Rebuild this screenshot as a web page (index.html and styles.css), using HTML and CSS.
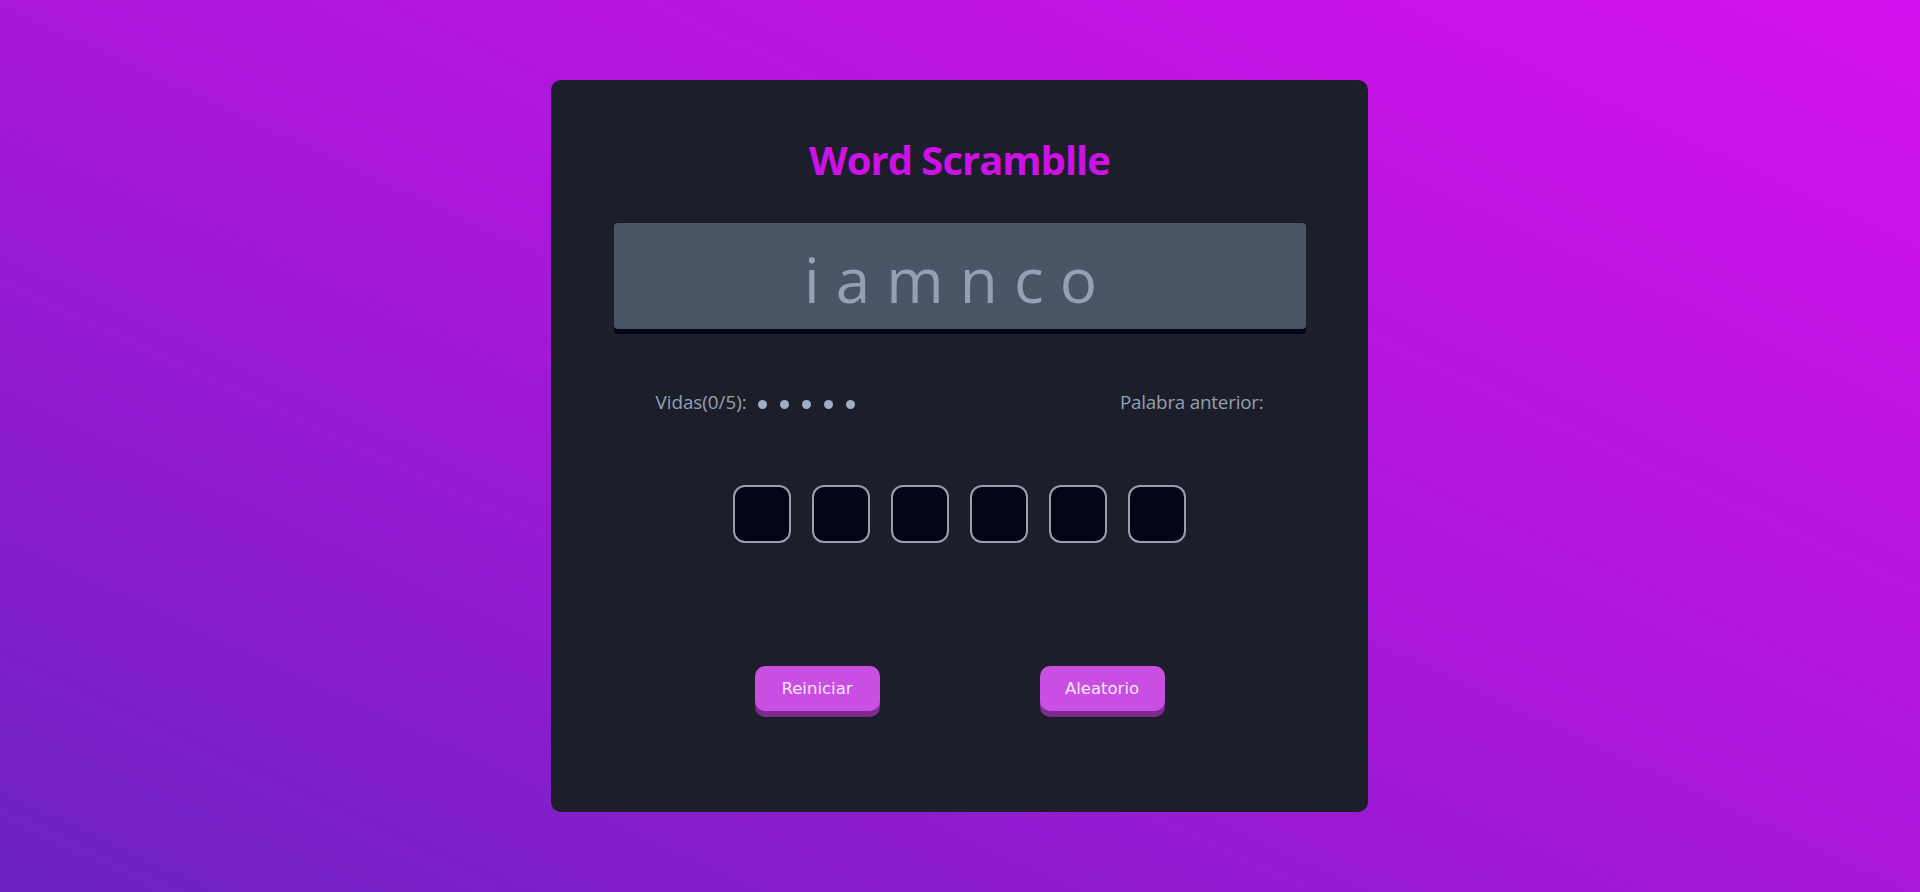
FILE: index.html
```html
<!DOCTYPE html>
<html lang="es">
<head>
<meta charset="utf-8">
<title>Word Scramblle</title>
<link rel="stylesheet" href="styles.css">
</head>
<body>
  <main class="card">
    <h1 class="title">Word Scramblle</h1>
    <div class="scramble">i a m n c o</div>
    <div class="info">
      <div class="lives">
        <span class="lives-label">Vidas(0/5):</span>
        <span class="dots">
          <span class="dot"></span><span class="dot"></span><span class="dot"></span><span class="dot"></span><span class="dot"></span>
        </span>
      </div>
      <div class="previous">Palabra anterior: <span class="prev-word"></span></div>
    </div>
    <div class="slots">
      <input class="slot" type="text" maxlength="1">
      <input class="slot" type="text" maxlength="1">
      <input class="slot" type="text" maxlength="1">
      <input class="slot" type="text" maxlength="1">
      <input class="slot" type="text" maxlength="1">
      <input class="slot" type="text" maxlength="1">
    </div>
    <div class="actions">
      <button class="btn" type="button">Reiniciar</button>
      <button class="btn" type="button">Aleatorio</button>
    </div>
  </main>
</body>
</html>
```

FILE: styles.css
```css
html, body {
  margin: 0;
  padding: 0;
}

body {
  min-height: 100vh;
  display: flex;
  align-items: center;
  justify-content: center;
  background: linear-gradient(to top right, #6c22c2 0%, #a917d9 50%, #d411ee 100%);
  font-family: "Open Sans", "Noto Sans", sans-serif;
}

.card {
  box-sizing: border-box;
  width: 817px;
  height: 732px;
  margin-left: -1px;
  padding: 56px 62px 0;
  background: #1c1f2a;
  border-radius: 10px;
  display: flex;
  flex-direction: column;
  align-items: center;
}

.title {
  margin: 0;
  font-size: 40px;
  line-height: 48px;
  font-weight: 700;
  color: #cc12e4;
  letter-spacing: -1px;
}

.scramble {
  box-sizing: border-box;
  margin-top: 39px;
  width: 692px;
  height: 106px;
  padding: 6px 17px 0 0;
  background: #4a5566;
  border-radius: 4px;
  box-shadow: 0 5px 0 #020617;
  text-align: center;
  font-size: 62px;
  font-weight: 400;
  line-height: 100px;
  color: #94a0b3;
  letter-spacing: 1px;
  word-spacing: -2px;
}

.info {
  box-sizing: border-box;
  margin-top: 61px;
  width: 692px;
  padding: 0 42px;
  display: flex;
  justify-content: space-between;
  align-items: center;
  font-size: 18.8px;
  line-height: 24px;
  color: #94a0b3;
}

.lives {
  display: flex;
  align-items: center;
}

.dots {
  display: flex;
  gap: 13px;
  margin-left: 11px;
  margin-top: 5px;
}

.dot {
  width: 9px;
  height: 9px;
  border-radius: 50%;
  background: #a3adc1;
}

.previous {
  letter-spacing: -0.2px;
}

.slots {
  margin-top: 71px;
  display: flex;
  gap: 21px;
}

.slot {
  box-sizing: border-box;
  width: 58px;
  height: 58px;
  margin: 0;
  padding: 0;
  border: 2px solid #9a9fae;
  border-radius: 12px;
  background: #020617;
  color: #e2e8f0;
  text-align: center;
  font-size: 28px;
  outline: none;
}

.actions {
  margin-top: 123px;
  display: flex;
  gap: 160px;
}

.btn {
  width: 125px;
  height: 45px;
  border: none;
  border-radius: 10px;
  background: #c94fe2;
  box-shadow: 0 6px 0 #7e2a91;
  color: #f6e6fa;
  font-family: "DejaVu Sans", "Noto Sans", sans-serif;
  font-size: 16.5px;
  cursor: pointer;
}
```
